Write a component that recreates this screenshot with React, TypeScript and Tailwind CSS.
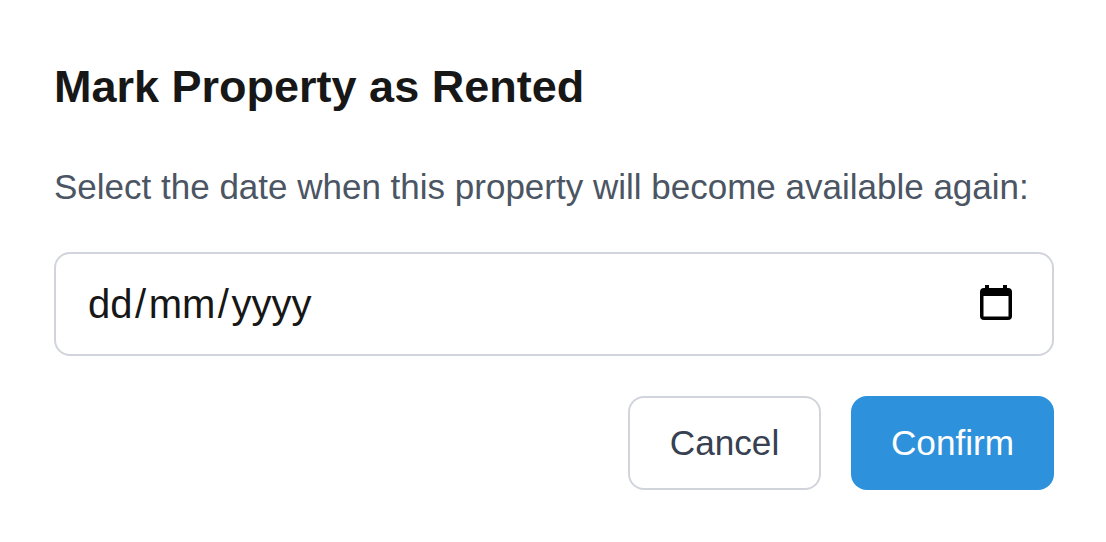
export default function App() {
  return (
    <div className="min-h-[542px] bg-white pl-[54px] pt-[60px] font-['Liberation_Sans',Arial,sans-serif]">
      <div className="w-[1000px]">
        <h2 className="text-[45px] leading-[54px] font-bold text-[#171717]">Mark Property as Rented</h2>

        <p className="mt-[46px] text-[35px] leading-[54px] text-[#4b5563]">
          Select the date when this property will become available again:
        </p>

        {/* date field */}
        <div className="mt-[38px] flex h-[104px] items-center justify-between rounded-[16px] border-2 border-[#d1d5db] pl-[32px] pr-[40px]">
          <span className="text-[40px] text-[#171717]">
            dd<span className="mx-[2.500px]">/</span>mm<span className="mx-[2.500px]">/</span>yyyy
          </span>
          <svg width="32" height="35" viewBox="0 0 32 35" className="mb-[4px] text-black">
            <path d="M5 0h4v3h14V0h4v3h1a4 4 0 0 1 4 4v24a4 4 0 0 1-4 4H4a4 4 0 0 1-4-4V7a4 4 0 0 1 4-4h1z M3.500 11v20.500h25V11z" fill="currentColor" fillRule="evenodd" />
          </svg>
        </div>

        <div className="mt-[40px] flex justify-end gap-[30px]">
          <button className="h-[94px] w-[193px] rounded-[16px] border-2 border-[#d1d5db] text-[35.200px] text-[#374151]">Cancel</button>
          <button className="h-[94px] w-[203px] rounded-[16px] bg-[#2d92db] text-[35.200px] text-white">Confirm</button>
        </div>
      </div>
    </div>
  );
}
